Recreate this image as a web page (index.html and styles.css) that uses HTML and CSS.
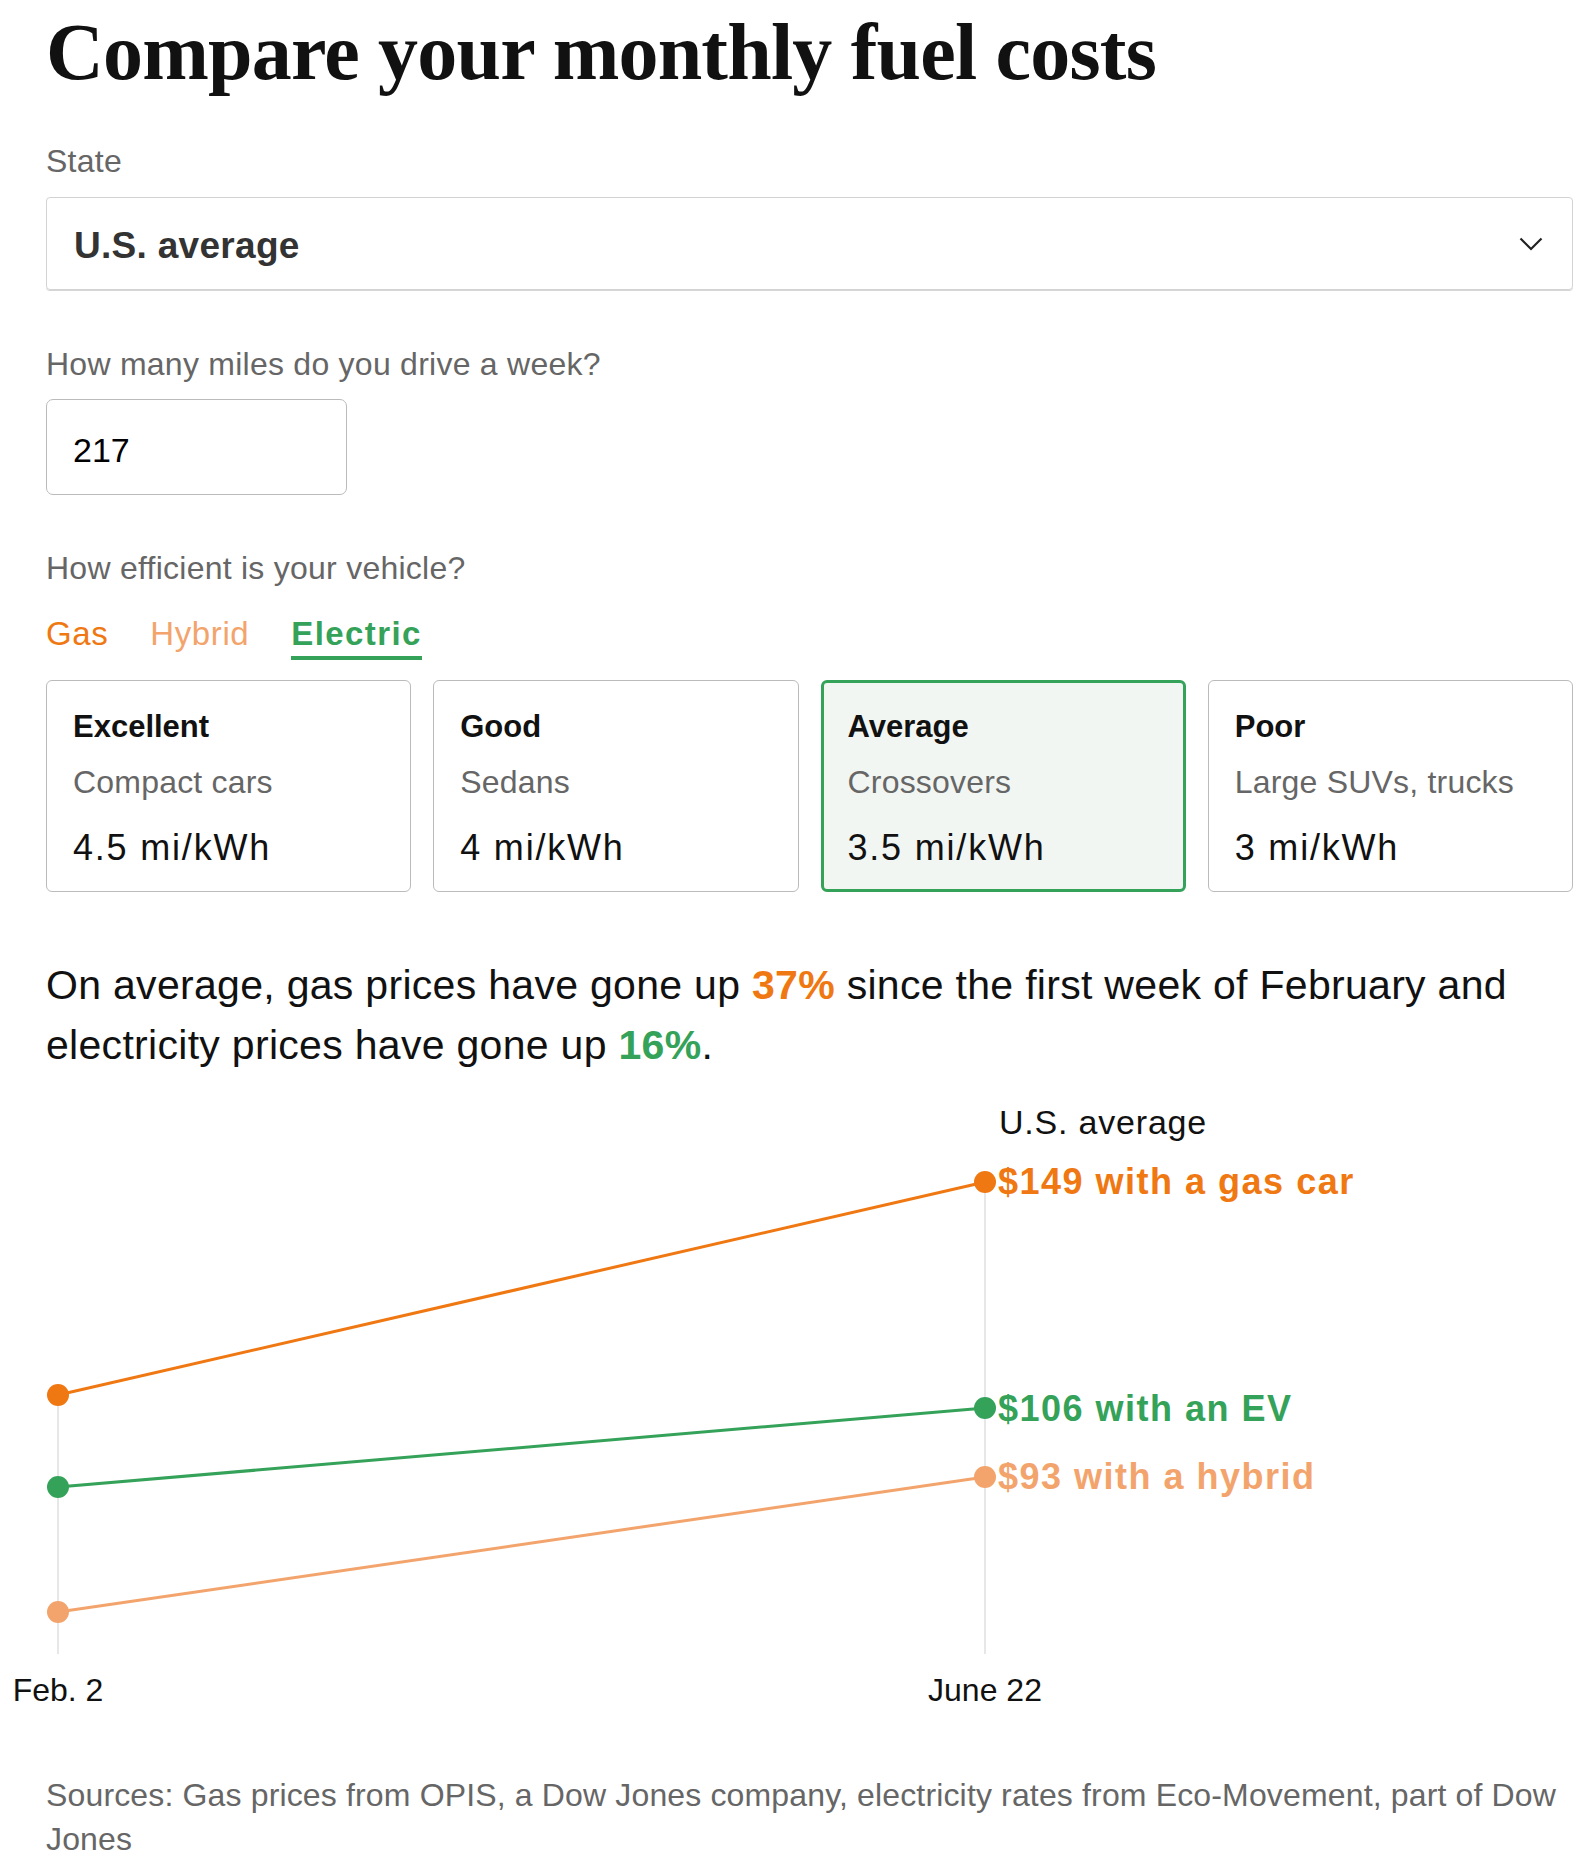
FILE: index.html
```html
<!DOCTYPE html>
<html lang="en">
<head>
  <meta charset="UTF-8" />
  <meta name="viewport" content="width=device-width, initial-scale=1.0"/>
  <title>Compare your monthly fuel costs</title>
  <link rel="stylesheet" href="styles.css">
</head>
<body>

  <main class="page">
    <h1 class="title">Compare your monthly fuel costs</h1>

    <!-- State picker -->
    <label class="field-label state-label" for="state">State</label>
    <div class="select" id="state">
      <span>U.S. average</span>
      <svg class="chevron" width="24" height="14" viewBox="0 0 24 14">
        <polyline points="1.5,1.5 12,12 22.5,1.5" fill="none" stroke="#222" stroke-width="2.2" />
      </svg>
    </div>

    <!-- Miles -->
    <label class="field-label miles-label" for="miles">How many miles do you drive a week?</label>
    <input class="miles" id="miles" type="text" value="217" />

    <!-- Efficiency -->
    <p class="field-label eff-label">How efficient is your vehicle?</p>
    <div class="tabs">
      <button class="tab tab-gas">Gas</button>
      <button class="tab tab-hybrid">Hybrid</button>
      <button class="tab tab-electric active">Electric</button>
    </div>

    <div class="cards">
      <div class="card">
        <div class="card-title">Excellent</div>
        <div class="card-sub">Compact cars</div>
        <div class="card-value">4.5 mi/kWh</div>
      </div>
      <div class="card">
        <div class="card-title">Good</div>
        <div class="card-sub">Sedans</div>
        <div class="card-value">4 mi/kWh</div>
      </div>
      <div class="card active">
        <div class="card-title">Average</div>
        <div class="card-sub">Crossovers</div>
        <div class="card-value">3.5 mi/kWh</div>
      </div>
      <div class="card">
        <div class="card-title">Poor</div>
        <div class="card-sub">Large SUVs, trucks</div>
        <div class="card-value">3 mi/kWh</div>
      </div>
    </div>

    <p class="summary">
      <span class="summary-line">On average, gas prices have gone up <strong class="gas">37%</strong> since the first week of February and</span>
      <span class="summary-line">electricity prices have gone up <strong class="ev">16%</strong>.</span>
    </p>

    <!-- Slope chart -->
    <svg class="chart" width="1527" height="640" viewBox="0 0 1527 640">
      <line class="grid" x1="12" y1="306" x2="12" y2="565" />
      <line class="grid" x1="939" y1="93" x2="939" y2="565" />

      <text class="chart-place" x="953" y="45">U.S. average</text>

      <line class="series gas-line" x1="12" y1="306" x2="939" y2="93" />
      <line class="series ev-line" x1="12" y1="398" x2="939" y2="319" />
      <line class="series hybrid-line" x1="12" y1="523" x2="939" y2="388" />

      <circle class="gas-dot" cx="12" cy="306" r="11" />
      <circle class="gas-dot" cx="939" cy="93" r="11" />
      <circle class="ev-dot" cx="12" cy="398" r="11" />
      <circle class="ev-dot" cx="939" cy="319" r="11" />
      <circle class="hybrid-dot" cx="12" cy="523" r="11" />
      <circle class="hybrid-dot" cx="939" cy="388" r="11" />

      <text class="end-label gas-text" x="952" y="105">$149 with a gas car</text>
      <text class="end-label ev-text" x="952" y="332">$106 with an EV</text>
      <text class="end-label hybrid-text" x="952" y="400">$93 with a hybrid</text>

      <text class="axis-label" x="12" y="612">Feb. 2</text>
      <text class="axis-label" x="939" y="612">June 22</text>
    </svg>

    <p class="sources">Sources: Gas prices from OPIS, a Dow Jones company, electricity rates from Eco-Movement, part of Dow Jones</p>
  </main>

</body>
</html>
```

FILE: styles.css
```css
body {
  margin: 0;
  font-family: "Liberation Sans", Arial, sans-serif;
  color: #111;
  background: #fff;
}

.page {
  width: 1527px;
  margin-left: 46px;
  padding-top: 4px;
}

.title {
  margin: 0;
  font-family: "Liberation Serif", "Times New Roman", serif;
  font-weight: 700;
  font-size: 80px;
  line-height: 96px;
  letter-spacing: -0.8px;
  color: #111;
}

.field-label {
  display: block;
  margin: 0;
  font-size: 32px;
  line-height: 40px;
  letter-spacing: 0.25px;
  color: #666;
}

.state-label {
  margin-top: 41px;
}

/* dropdown */
.select {
  box-sizing: border-box;
  display: flex;
  align-items: center;
  justify-content: space-between;
  height: 93px;
  margin-top: 16px;
  padding: 4px 29px 0 27px;
  border: 1px solid #d3d3d3;
  border-radius: 4px;
  box-shadow: 0 1px 0 #d6d6d6;
  font-size: 37px;
  font-weight: 700;
  letter-spacing: 0.3px;
  color: #333;
}

.chevron {
  margin-top: -4px;
}

.miles-label {
  margin-top: 54px;
}

.miles {
  box-sizing: border-box;
  display: block;
  width: 301px;
  height: 96px;
  margin-top: 15px;
  padding: 6px 26px 0;
  border: 1px solid #bbb;
  border-radius: 7px;
  font-family: "Liberation Sans", Arial, sans-serif;
  font-size: 34px;
  color: #000;
  outline: none;
}

.eff-label {
  margin-top: 53px;
}

/* fuel tabs */
.tabs {
  display: flex;
  gap: 42px;
  margin-top: 26px;
}

.tab {
  padding: 0 0 2px;
  border: none;
  border-bottom: 4px solid transparent;
  background: none;
  font-family: "Liberation Sans", Arial, sans-serif;
  font-size: 33px;
  line-height: 40px;
  letter-spacing: 0.6px;
  cursor: pointer;
}

.tab-gas {
  color: #f07812;
}

.tab-hybrid {
  color: #f3a46c;
}

.tab-electric {
  color: #35a259;
}

.tab.active {
  font-weight: 700;
  letter-spacing: 1.4px;
  border-bottom-color: #35a259;
}

/* efficiency cards */
.cards {
  display: grid;
  grid-template-columns: repeat(4, 1fr);
  gap: 22px;
  margin-top: 20px;
}

.card {
  box-sizing: border-box;
  height: 212px;
  padding: 28px 26px 0;
  border: 1px solid #bbb;
  border-radius: 6px;
}

.card.active {
  padding: 26px 24px 0;
  border: 3px solid #35a259;
  background: #f2f6f3;
}

.card-title {
  font-size: 31px;
  line-height: 36px;
  font-weight: 700;
  color: #111;
}

.card-sub {
  margin-top: 17px;
  font-size: 32px;
  line-height: 40px;
  letter-spacing: 0.2px;
  color: #666;
}

.card-value {
  margin-top: 24px;
  font-size: 36px;
  line-height: 44px;
  letter-spacing: 1.8px;
  color: #111;
}

/* summary sentence */
.summary {
  margin: 63px 0 0;
  font-size: 41px;
  line-height: 60px;
  letter-spacing: 0.3px;
  color: #111;
}

.summary-line {
  display: block;
}

.summary .gas {
  color: #f07812;
}

.summary .ev {
  color: #35a259;
}

/* chart */
.chart {
  display: block;
  margin-top: 14px;
  overflow: visible;
  font-family: "Liberation Sans", Arial, sans-serif;
}

.grid {
  stroke: #cfcfcf;
  stroke-width: 1;
}

.series {
  stroke-width: 3;
}

.gas-line { stroke: #f07812; }
.ev-line { stroke: #35a259; }
.hybrid-line { stroke: #f3a46c; }

.gas-dot { fill: #f07812; }
.ev-dot { fill: #35a259; }
.hybrid-dot { fill: #f3a46c; }

.chart-place {
  font-size: 34px;
  letter-spacing: 0.8px;
  fill: #111;
}

.end-label {
  font-size: 36px;
  font-weight: 700;
  letter-spacing: 1.5px;
}

.gas-text { fill: #f07812; }
.ev-text { fill: #35a259; }
.hybrid-text { fill: #f3a46c; }

.axis-label {
  font-size: 32px;
  fill: #111;
  text-anchor: middle;
}

.sources {
  margin: 44px 0 0;
  font-size: 32px;
  line-height: 44px;
  letter-spacing: 0.15px;
  color: #666;
}
```
